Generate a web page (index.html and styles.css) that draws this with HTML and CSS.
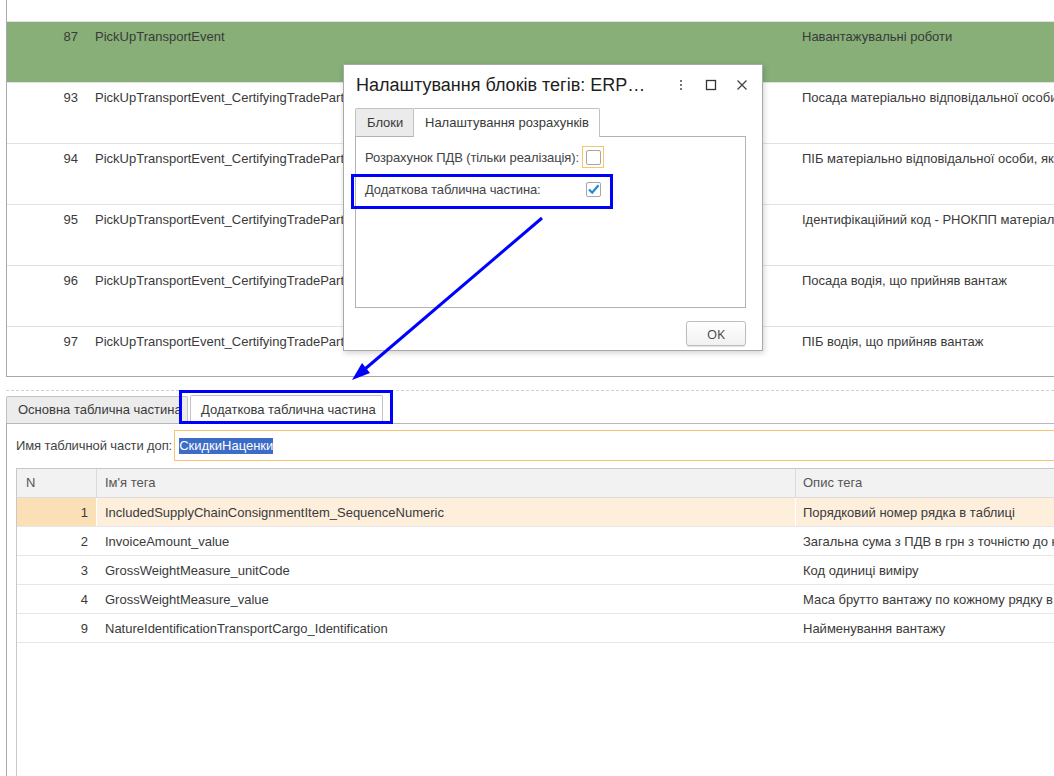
FILE: index.html
```html
<!DOCTYPE html>
<html lang="uk">
<head>
<meta charset="utf-8">
<title>Налаштування блоків тегів</title>
<link rel="stylesheet" href="styles.css">
</head>
<body>
<div class="page">
  <div class="grid-top">
    <div class="gt-spacer"></div>
    <div class="gt-row gt-green"><div class="c-num">87</div><div class="c-name">PickUpTransportEvent</div><div class="c-desc">Навантажувальні роботи</div></div>
    <div class="gt-row"><div class="c-num">93</div><div class="c-name">PickUpTransportEvent_CertifyingTradeParty_Position</div><div class="c-desc">Посада матеріально відповідальної особи, яка здала вантаж</div></div>
    <div class="gt-row"><div class="c-num">94</div><div class="c-name">PickUpTransportEvent_CertifyingTradeParty_Name</div><div class="c-desc">ПІБ матеріально відповідальної особи, яка здала вантаж</div></div>
    <div class="gt-row"><div class="c-num">95</div><div class="c-name">PickUpTransportEvent_CertifyingTradeParty_ID</div><div class="c-desc">Ідентифікаційний код - РНОКПП матеріально відповідальної особи</div></div>
    <div class="gt-row"><div class="c-num">96</div><div class="c-name">PickUpTransportEvent_CertifyingTradeParty_DriverPos</div><div class="c-desc">Посада водія, що прийняв вантаж</div></div>
    <div class="gt-row"><div class="c-num">97</div><div class="c-name">PickUpTransportEvent_CertifyingTradeParty_Driver</div><div class="c-desc">ПІБ водія, що прийняв вантаж</div></div>
  </div>

  <div class="splitter"></div>

  <div class="tabs">
    <div class="tab">Основна таблична частина</div>
    <div class="tab tab-active">Додаткова таблична частина</div>
  </div>

  <div class="panel">
    <div class="field-row">
      <span class="field-label">Имя табличной части доп:</span>
      <div class="field-input"><span class="sel">СкидкиНаценки</span></div>
    </div>

    <div class="tbl">
      <div class="tbl-head">
        <div class="t-num">N</div>
        <div class="t-name">Ім'я тега</div>
        <div class="t-desc">Опис тега</div>
      </div>
      <div class="tbl-row tbl-current">
        <div class="t-num">1</div>
        <div class="t-name">IncludedSupplyChainConsignmentItem_SequenceNumeric</div>
        <div class="t-desc">Порядковий номер рядка в таблиці</div>
      </div>
      <div class="tbl-row">
        <div class="t-num">2</div>
        <div class="t-name">InvoiceAmount_value</div>
        <div class="t-desc">Загальна сума з ПДВ в грн з точністю до копійок</div>
      </div>
      <div class="tbl-row">
        <div class="t-num">3</div>
        <div class="t-name">GrossWeightMeasure_unitCode</div>
        <div class="t-desc">Код одиниці виміру</div>
      </div>
      <div class="tbl-row">
        <div class="t-num">4</div>
        <div class="t-name">GrossWeightMeasure_value</div>
        <div class="t-desc">Маса брутто вантажу по кожному рядку в кілограмах</div>
      </div>
      <div class="tbl-row">
        <div class="t-num">9</div>
        <div class="t-name">NatureIdentificationTransportCargo_Identification</div>
        <div class="t-desc">Найменування вантажу</div>
      </div>
    </div>
  </div>

  <div class="dialog">
    <div class="dlg-head">
      <div class="dlg-title">Налаштування блоків тегів: ERP…</div>
      <div class="dlg-icons">
        <svg class="ic" width="10" height="12" viewBox="0 0 10 12"><rect x="4" y="1" width="2" height="2" fill="#777"/><rect x="4" y="5" width="2" height="2" fill="#777"/><rect x="4" y="9" width="2" height="2" fill="#777"/></svg>
        <svg class="ic" width="12" height="12" viewBox="0 0 12 12"><rect x="1.5" y="1.5" width="9" height="9" fill="none" stroke="#333" stroke-width="1.3"/></svg>
        <svg class="ic" width="12" height="12" viewBox="0 0 12 12"><path d="M1.5 1.5 L10.5 10.5 M10.5 1.5 L1.5 10.5" stroke="#444" stroke-width="1.3" fill="none"/></svg>
      </div>
    </div>
    <div class="dlg-tabs">
      <div class="dtab">Блоки</div>
      <div class="dtab dtab-active">Налаштування розрахунків</div>
    </div>
    <div class="dlg-panel">
      <div class="chk-row">
        <span class="chk-label">Розрахунок ПДВ (тільки реалізація):</span>
        <span class="chk-wrap chk-focus"><span class="chk"></span></span>
      </div>
      <div class="chk-row chk-row2">
        <span class="chk-label">Додаткова таблична частина:</span>
        <span class="chk-wrap"><span class="chk"><svg width="13" height="13" viewBox="0 0 13 13"><path d="M2 6.5 L5.2 9.6 L11.5 2.2" fill="none" stroke="#1f8ad6" stroke-width="2.2"/></svg></span></span>
      </div>
    </div>
    <div class="dlg-foot">
      <button class="btn">OK</button>
    </div>
  </div>

  <div class="mark mark-1"></div>
  <div class="mark mark-2"></div>
  <svg class="arrow" width="1054" height="776" viewBox="0 0 1054 776">
    <line x1="542" y1="218" x2="365" y2="369" stroke="#0000ff" stroke-width="3"/>
    <polygon points="352,380 370,373 362,363" fill="#0000ff"/>
  </svg>
</div>
</body>
</html>
```

FILE: styles.css
```css
* { box-sizing: border-box; }
html, body {
  margin: 0;
  padding: 0;
  background: #fff;
}
body {
  width: 1054px;
  height: 776px;
  overflow: hidden;
  font-family: "Liberation Sans", Arial, sans-serif;
  font-size: 13px;
  color: #3a3a3a;
}
.page {
  position: relative;
  width: 1054px;
  height: 776px;
  overflow: hidden;
}

/* top grid */
.grid-top {
  margin-left: 6px;
  width: 1100px;
  height: 377px;
  border-left: 1px solid #a8a8a8;
  border-bottom: 1px solid #a8a8a8;
  overflow: hidden;
}
.gt-spacer {
  height: 22px;
  border-bottom: 1px solid #e2e2e2;
}
.gt-row {
  display: flex;
  height: 61px;
  border-bottom: 1px solid #e2e2e2;
  line-height: 16px;
  padding-top: 7px;
  white-space: nowrap;
}
.gt-green { background: #87af77; }
.c-num {
  width: 71px;
  flex-shrink: 0;
  text-align: right;
}
.c-name {
  width: 707px;
  flex-shrink: 0;
  padding-left: 17px;
  overflow: hidden;
}
.c-desc {
  padding-left: 17px;
}

/* splitter */
.splitter {
  margin-top: 13px;
  margin-left: 6px;
  border-top: 1px dashed #d2d2d2;
}

/* tabs */
.tabs {
  display: flex;
  align-items: flex-end;
  margin-left: 6px;
  margin-top: 2px;
  height: 30px;
}
.tab {
  height: 27px;
  width: 182px;
  padding-left: 11px;
  line-height: 26px;
  background: #ececec;
  border: 1px solid #c2c2c2;
  border-bottom: none;
  border-radius: 2px 2px 0 0;
  white-space: nowrap;
  overflow: hidden;
}
.tab-active {
  position: relative;
  height: 29px;
  width: 193px;
  margin-left: 2px;
  margin-bottom: -1px;
  padding-left: 10px;
  background: #fff;
  line-height: 28px;
}

.panel {
  margin-left: 6px;
  height: 360px;
  border-left: 1px solid #a8a8a8;
  border-top: 1px solid #b8b8b8;
  padding-left: 9px;
}
.field-row {
  display: flex;
  align-items: center;
  margin-top: 6px;
  height: 31px;
}
.field-label {
  white-space: nowrap;
  color: #444;
  letter-spacing: -0.1px;
  margin-right: 2px;
}
.field-input {
  flex: 1;
  height: 31px;
  margin-right: -30px;
  border: 1px solid #f6c36e;
  padding-left: 4px;
  display: flex;
  align-items: center;
}
.sel {
  background: #3c6cc6;
  color: #fff;
  line-height: 16px;
}

/* bottom table */
.tbl {
  margin-top: 7px;
  margin-right: -40px;
  height: 330px;
  border-left: 1px solid #c8c8c8;
  border-top: 1px solid #c8c8c8;
}
.tbl-head, .tbl-row {
  display: flex;
  white-space: nowrap;
  line-height: 16px;
}
.tbl-head {
  height: 29px;
  background: #f2f2f2;
  border-bottom: 1px solid #dcdcdc;
  color: #555;
}
.tbl-head > div {
  padding-top: 6px;
  border-right: 1px solid #dadada;
}
.tbl-row {
  height: 29px;
  border-bottom: 1px solid #e6e6e6;
}
.tbl-row > div {
  padding-top: 7px;
  border-right: 1px solid transparent;
}
.t-num {
  width: 80px;
  flex-shrink: 0;
  text-align: right;
  padding-right: 8px;
}
.tbl-head .t-num {
  text-align: left;
  padding-left: 9px;
}
.t-name {
  width: 699px;
  flex-shrink: 0;
  padding-left: 8px;
}
.t-desc {
  flex: 1;
  padding-left: 7px;
}
.tbl-current { background: #fdefdc; }
.tbl-current .t-num { background: #fbe0b7; }
.tbl-current > div { border-right-color: #fff; }

/* dialog */
.dialog {
  position: absolute;
  left: 343px;
  top: 64px;
  width: 420px;
  height: 287px;
  background: #fff;
  border: 1px solid #a9a9a9;
  box-shadow: 1px 2px 6px rgba(0,0,0,0.18);
}
.dlg-head {
  display: flex;
  align-items: center;
  height: 40px;
  padding-left: 12px;
}
.dlg-title {
  flex: 1;
  font-size: 18px;
  color: #1e1e1e;
  white-space: nowrap;
}
.dlg-icons {
  display: flex;
  align-items: center;
  gap: 19px;
  padding-right: 14px;
}
.ic { display: block; }
.dlg-tabs {
  display: flex;
  margin-top: 3px;
  padding-left: 11px;
  height: 28px;
}
.dtab {
  height: 28px;
  width: 59px;
  padding-left: 11px;
  line-height: 27px;
  background: #ebebeb;
  border: 1px solid #c2c2c2;
  border-bottom: none;
  border-radius: 2px 2px 0 0;
  white-space: nowrap;
}
.dtab-active {
  position: relative;
  width: 187px;
  margin-left: -1px;
  height: 29px;
  padding-left: 11px;
  background: #fff;
  z-index: 1;
}
.dlg-panel {
  margin-left: 11px;
  width: 391px;
  height: 172px;
  border: 1px solid #b3b3b3;
  padding-left: 9px;
  padding-top: 9px;
}
.chk-row {
  display: flex;
  align-items: center;
  height: 22px;
}
.chk-row2 { margin-top: 10px; }
.chk-label {
  width: 217px;
  flex-shrink: 0;
  white-space: nowrap;
  color: #444;
  letter-spacing: -0.1px;
}
.chk-wrap {
  width: 22px;
  height: 22px;
  border: 1px solid transparent;
  display: flex;
  align-items: center;
  justify-content: center;
}
.chk-focus { border-color: #f7c36c; }
.chk {
  width: 15px;
  height: 15px;
  border: 1px solid #a5a5a5;
  border-radius: 2px;
  background: #fff;
  display: flex;
  align-items: center;
  justify-content: center;
}
.chk svg { display: block; }
.dlg-foot {
  display: flex;
  justify-content: flex-end;
  padding-right: 16px;
  margin-top: 13px;
}
.btn {
  width: 60px;
  height: 25px;
  font-family: "Open Sans", "Liberation Sans", sans-serif;
  font-size: 13px;
  color: #444;
  background: linear-gradient(#ffffff, #f1f1f1);
  border: 1px solid #bdbdbd;
  border-radius: 3px;
  box-shadow: 0 1px 1px rgba(0,0,0,0.12);
  padding: 0;
}

/* annotations */
.mark {
  position: absolute;
  border: 3px solid #0000ff;
}
.mark-1 { left: 351px; top: 174px; width: 262px; height: 35px; }
.mark-2 { left: 179px; top: 390px; width: 214px; height: 34px; }
.arrow {
  position: absolute;
  left: 0;
  top: 0;
  pointer-events: none;
}
```
